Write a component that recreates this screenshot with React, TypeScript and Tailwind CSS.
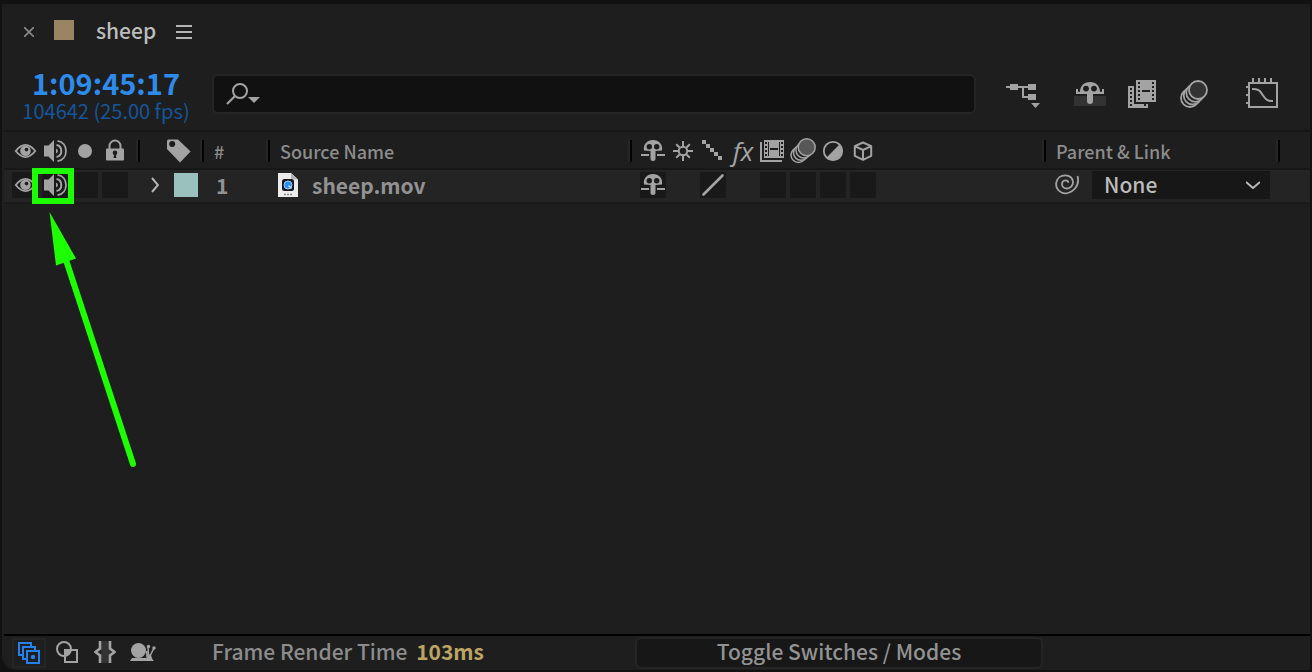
import type { ReactNode } from "react";

const INK = "#a3a3a3";

function Icon({ w = 26, h = 26, children }: { w?: number; h?: number; children: ReactNode }) {
  return (
    <svg width={w} height={h} viewBox={`0 0 ${w} ${h}`} fill="none" className="block shrink-0" aria-hidden="true">
      {children}
    </svg>
  );
}

const Eye = () => (
  <Icon>
    <path d="M3.8 13C8 7.6 11 6.9 13.5 6.9S19 7.6 23.2 13C19 18.4 16 19.1 13.5 19.1S8 18.4 3.8 13z" stroke={INK} strokeWidth="1.900" />
    <circle cx="13.5" cy="12.800" r="5.300" fill={INK} />
    <circle cx="14.500" cy="11.600" r="1.800" fill="#1c1c1c" />
  </Icon>
);

const Speaker = () => (
  <Icon>
    <path d="M2 7.5h4.5L12 2v22l-5.500-5.500H2z" fill={INK} />
    <path d="M14.500 7c3 .6 4.800 3 4.800 6s-1.800 5.400-4.800 6" stroke={INK} strokeWidth="2" />
    <path d="M15.500 2.800C21 3.600 24 8 24 13s-3 9.400-8.500 10.200" stroke={INK} strokeWidth="1.800" />
    <path d="M14 10.500a2.600 2.600 0 0 1 0 5z" fill={INK} />
  </Icon>
);

const Dot = () => (
  <Icon>
    <circle cx="13" cy="13" r="7" fill={INK} />
  </Icon>
);

const Lock = () => (
  <Icon>
    <path d="M7.500 12V8a5.500 5.500 0 0 1 11 0v4" stroke={INK} strokeWidth="2" />
    <rect x="4" y="10.500" width="18" height="12" rx="1" fill={INK} />
    <circle cx="13" cy="14.800" r="2.300" fill="#1c1c1c" />
    <path d="M12.200 15h1.600l.6 5h-2.800z" fill="#1c1c1c" />
  </Icon>
);

const Tag = () => (
  <Icon>
    <path d="M1 2.500L2 1.500H12L24.600 13.600 14 24.600 1 11z" fill={INK} />
    <circle cx="6.200" cy="6" r="3" fill="#1c1c1c" />
  </Icon>
);

const Shy = () => (
  <Icon>
    <path d="M4 12.500C3 6.500 7 2 13 2s10 4.500 9 10.500l-6.500.5v7.500a2.500 2.500 0 0 1-5 0V13z" fill={INK} />
    <circle cx="9.300" cy="8.800" r="2.700" fill="#1c1c1c" />
    <circle cx="16.700" cy="8.800" r="2.700" fill="#1c1c1c" />
    <path d="M1 17h8M17 17h8" stroke={INK} strokeWidth="2" />
  </Icon>
);

const Sun = () => (
  <Icon>
    <circle cx="13" cy="13" r="4.200" stroke={INK} strokeWidth="2" />
    <path d="M13 3v5M13 18v5M3 13h5M18 13h5M6.200 6.200l3.300 3.300M16.500 16.500l3.300 3.300M6.200 19.800l3.300-3.300M16.500 9.500l3.300-3.300" stroke={INK} strokeWidth="2" />
  </Icon>
);

const Stairs = () => (
  <Icon>
    <path d="M2 2h4v4H2zM6 6h4v4H6zM10 10h4v4h-4zM14 14h4v4h-4zM18 18h4v4h-4z" fill={INK} />
  </Icon>
);

const Film = () => (
  <Icon>
    <path d="M1 4v19h21" stroke={INK} strokeWidth="2" />
    <rect x="4" y="2" width="20" height="18" fill={INK} />
    <path d="M5 4h2v2H5zM5 8h2v2H5zM5 12h2v2H5zM5 16h2v2H5zM21 4h2v2h-2zM21 8h2v2h-2zM21 12h2v2h-2zM21 16h2v2h-2zM10 10h8v2h-8zM8 4h1v14H8zM19 4h1v14h-1z" fill="#1c1c1c" />
  </Icon>
);

const MotionBlur = () => (
  <Icon>
    <g stroke={INK} strokeWidth="1.500" fill="#1e1e1e">
      <circle cx="8.500" cy="17" r="7.500" />
      <circle cx="11" cy="14.800" r="7.500" />
      <circle cx="13.800" cy="12.200" r="7.800" />
      <circle cx="16.700" cy="9.300" r="8.500" fill="#575757" />
    </g>
  </Icon>
);

const Adjustment = () => (
  <Icon>
    <circle cx="13" cy="13" r="9.200" stroke={INK} strokeWidth="1.800" />
    <path d="M19.700 6.300A9.400 9.400 0 0 1 6.300 19.700z" fill={INK} />
  </Icon>
);

const Cube = () => (
  <Icon>
    <path d="M13 4.500l8.200 3.600v9.800L13 21.800l-8.200-3.900V8.100zM4.800 8.100L13 12l8.200-3.900M13 12v9.800" stroke={INK} strokeWidth="2" strokeLinejoin="round" />
  </Icon>
);

const Slash = () => (
  <Icon>
    <path d="M3.500 22.500l19-19" stroke={INK} strokeWidth="2.600" strokeLinecap="round" />
  </Icon>
);

const Flowchart = () => (
  <Icon w={36} h={28}>
    <path d="M2 7h24M19 7v10h6" stroke={INK} strokeWidth="2" />
    <path d="M6 4h8v6H6zM24 4h8v6h-8zM24 14h8v6h-8zM27 23h9l-4.500 5z" fill={INK} />
  </Icon>
);

const ShyLarge = () => (
  <Icon w={32} h={28}>
    <rect y="16" width="32" height="10" fill="#333" />
    <path d="M6 12C6 6 10 2 16 2s10 4 10 10l2-.5V9h2v5H19v7a3 3 0 0 1-6 0v-7H2V9h2v2.500z" fill={INK} />
    <circle cx="12" cy="8.600" r="2.900" fill="#1e1e1e" />
    <circle cx="20" cy="8.600" r="2.900" fill="#1e1e1e" />
  </Icon>
);

const FilmLarge = () => (
  <Icon w={28} h={28}>
    <path d="M0 6h6v18h14v4H0z" fill={INK} />
    <path d="M2 8h2v2H2zM2 12h2v2H2zM2 16h2v2H2zM2 20h2v2H2zM2 24h2v2H2zM16 24h2v2h-2z" fill="#1e1e1e" />
    <rect x="8" width="20" height="22" fill={INK} />
    <path d="M10 2h2v2h-2zM10 6h2v2h-2zM10 10h2v2h-2zM10 14h2v2h-2zM10 18h2v2h-2zM24 2h2v2h-2zM24 6h2v2h-2zM24 10h2v2h-2zM24 14h2v2h-2zM24 18h2v2h-2zM14 10h8v2h-8z" fill="#1e1e1e" />
  </Icon>
);

const MotionBlurLarge = () => (
  <Icon w={28} h={28}>
    <g stroke={INK} strokeWidth="1.800" fill="#1e1e1e">
      <circle cx="10" cy="18" r="9" />
      <circle cx="12.700" cy="15.500" r="9" />
      <circle cx="15.300" cy="12.800" r="9" />
      <circle cx="18" cy="10" r="9" fill="#333" />
    </g>
  </Icon>
);

const GraphEditor = () => (
  <Icon w={32} h={32}>
    <path d="M3 7h28v24H3zM7 2v4M13 2v4M19 2v4M25 2v4M0 11h3M0 19h3M0 27h3" stroke={INK} strokeWidth="2" />
    <path d="M6 13c8 0 8 2.500 11 6.500s4 5.500 10 5.500" stroke={INK} strokeWidth="2" />
  </Icon>
);

const PickWhip = () => (
  <Icon w={24} h={22}>
    <path d="M22.500 2c1.200 4.500.5 9-2.500 12.500-3.300 4-9 6-13.500 4C2.500 16.800.5 12.500 1.300 8.500 2.200 4 6 1.300 10.300 1.300c4.400 0 7.700 3 7.700 6.900 0 3.500-2.700 6.300-6 6.300-2.800 0-5-1.800-5-4.300 0-2.200 1.600-3.900 3.600-3.900 1.600 0 2.700 1 2.700 2.400" stroke={INK} strokeWidth="1.800" />
  </Icon>
);

const MovieFile = () => (
  <Icon w={20} h={24}>
    <path d="M0 0h13l7 6.500V24H0z" fill="#ececec" />
    <path d="M13 0l7 6.500h-7z" fill="#b4b4b4" />
    <rect x="4" y="6" width="12" height="12" rx="2.500" fill="#16181c" />
    <circle cx="10" cy="12" r="4" fill="#2a8cf0" stroke="#8fd0ff" strokeWidth="1" />
    <path d="M10.500 12.500l3 3" stroke="#cfe8ff" strokeWidth="1.200" />
    <path d="M6 21.500h8" stroke="#888" strokeWidth="1.500" strokeDasharray="2 1" />
  </Icon>
);

const LayerPanes = () => (
  <Icon w={22} h={22}>
    <g stroke="#2680eb" strokeWidth="2">
      <path d="M5 13H1V1h12v4" />
      <path d="M9 17H5V5h12v4" />
      <rect x="9" y="9" width="12" height="12" />
    </g>
    <circle cx="15" cy="15" r="2.200" fill="#2680eb" />
  </Icon>
);

const TransferPanes = () => (
  <Icon w={22} h={22}>
    <path d="M8 8h7.500A8 8 0 0 1 8 15.500z" fill={INK} />
    <circle cx="8" cy="8" r="7" stroke={INK} strokeWidth="2" />
    <rect x="9" y="9" width="12" height="12" stroke={INK} strokeWidth="2" />
  </Icon>
);

const Braces = () => (
  <Icon w={22} h={22}>
    <rect x="7" width="9" height="22" fill="#333" />
    <path d="M6 0v7.500L1.500 11 6 14.500V22M16 0v7.500l4.500 3.500-4.500 3.500V22" stroke={INK} strokeWidth="2.600" />
  </Icon>
);

const Snail = () => (
  <Icon w={26} h={18}>
    <circle cx="8.500" cy="7.500" r="7.500" fill={INK} />
    <path d="M0 18l2-3h13c2 0 2.500-1 3-4l3 1c1 3 1 4 3 6z" fill={INK} />
    <path d="M18.500 13l-.5-9M20 13l4-8M17 14l-.5-6" stroke={INK} strokeWidth="1.500" />
    <circle cx="18.500" cy="3.500" r="1.700" fill={INK} />
    <circle cx="24" cy="5" r="1.700" fill={INK} />
  </Icon>
);

function Slot({ boxed = false, label, children }: { boxed?: boolean; label?: string; children?: ReactNode }) {
  if (!boxed) return <span className="block size-[26px]">{children}</span>;
  return (
    <button type="button" aria-label={label} className="block size-[26px] bg-[#191919]">
      {children}
    </button>
  );
}

const Divider = () => <span className="h-[22px] w-1 shrink-0 border-r-2 border-l-2 border-r-black border-l-[#262626]" />;

const HEAD = "h-9 p-0 pt-0.5 text-left align-middle font-medium";
const CELL = "h-9 border-y-2 border-t-[#171717] border-b-[#1a1a1a] p-0 pb-0.5 align-middle";

export default function App() {
  return (
    <div className="flex min-h-screen flex-col bg-[#121212] pt-1 pr-0.5 pb-0.5 pl-0.5 font-['Noto_Sans_CJK_SC','Noto_Sans',sans-serif] text-[#a3a3a3]">
      <main className="flex grow flex-col rounded-bl-[14px] bg-[#1e1e1e] pl-0.5">
        <header className="flex h-14 items-center pl-[17px]">
          <button type="button" aria-label="Close" className="mr-[17px] flex size-4 items-center justify-center">
            <Icon w={10} h={10}>
              <path d="M0 0l10 10M10 0L0 10" stroke="#8a8a8a" strokeWidth="1.600" />
            </Icon>
          </button>
          <span className="mb-1 size-5 bg-[#998564]" />
          <h1 className="mb-1 ml-[22px] text-[21px] leading-7 font-medium text-[#bcbcbc]">sheep</h1>
          <button type="button" aria-label="Panel menu" className="ml-5">
            <Icon w={16} h={14}>
              <path d="M0 1h16M0 7h16M0 13h16" stroke="#b5b5b5" strokeWidth="2" />
            </Icon>
          </button>
        </header>

        <div className="flex h-[72px] items-start border-b-2 border-[#161616] pr-8">
          <div className="flex w-[208px] shrink-0 flex-col items-center pt-1.5 pr-1">
            <span className="text-[29px] leading-8 font-bold text-[#2d8ceb]">1:09:45:17</span>
            <span className="text-[20px] leading-[26px] text-[#17559a]">104642 (25.00 fps)</span>
          </div>
          <label className="mt-3.5 flex h-10 grow items-center rounded-md border-2 border-[#252525] bg-[#111] pl-3">
            <Icon w={36} h={24}>
              <circle cx="14" cy="9" r="7" stroke={INK} strokeWidth="2" />
              <path d="M9 14l-8 8" stroke={INK} strokeWidth="2.200" />
              <path d="M22 15h12l-6 6z" fill={INK} />
            </Icon>
            <input type="search" aria-label="Search layers" className="h-8 min-w-0 grow bg-transparent px-2 text-[20px] outline-none" />
          </label>
          <div className="flex h-[68px] shrink-0 items-center pl-7">
            <button type="button" aria-label="Mini-flowchart"><Flowchart /></button>
            <button type="button" aria-label="Hide shy layers" className="ml-[34px]"><ShyLarge /></button>
            <button type="button" aria-label="Frame blending" className="ml-[22px]"><FilmLarge /></button>
            <button type="button" aria-label="Motion blur" className="ml-6"><MotionBlurLarge /></button>
            <button type="button" aria-label="Graph editor" className="mb-1 ml-[38px]"><GraphEditor /></button>
          </div>
        </div>

        <div className="relative grow">
          <table className="w-full table-fixed border-separate border-spacing-0">
            <colgroup>
              <col className="w-[136px]" />
              <col className="w-16" />
              <col className="w-[66px]" />
              <col />
              <col className="w-[414px]" />
              <col className="w-[234px]" />
              <col className="w-[30px]" />
            </colgroup>
            <thead>
              <tr className="text-[18px] leading-[22px] text-[#8c8c8c]">
                <th className={HEAD}>
                  <div className="flex items-center justify-between pl-2">
                    <span className="flex gap-1"><Eye /><Speaker /><Dot /><Lock /></span>
                    <Divider />
                  </div>
                </th>
                <th className={HEAD}>
                  <div className="flex items-center justify-between pl-[26px]"><Tag /><Divider /></div>
                </th>
                <th className={HEAD}>
                  <div className="flex items-center justify-between pl-2.5"><span>#</span><Divider /></div>
                </th>
                <th className={HEAD}>
                  <div className="flex items-center justify-between pl-2.5"><span>Source Name</span><Divider /></div>
                </th>
                <th className={HEAD}>
                  <div className="flex items-center justify-between pl-2">
                    <span className="flex gap-1">
                      <Shy />
                      <Sun />
                      <Stairs />
                      <span className="flex size-[26px] items-center justify-center font-['Open_Sans',sans-serif] text-[26px] leading-6 font-normal text-[#a3a3a3] italic">fx</span>
                      <Film />
                      <MotionBlur />
                      <Adjustment />
                      <Cube />
                    </span>
                    <Divider />
                  </div>
                </th>
                <th className={HEAD}>
                  <div className="flex items-center justify-between pl-2.5"><span>Parent &amp; Link</span><Divider /></div>
                </th>
                <th className={HEAD} aria-label="Timeline" />
              </tr>
            </thead>
            <tbody>
              <tr className="bg-[#242424] text-[21px] leading-[26px] font-bold text-[#929292]">
                <td className={CELL}>
                  <div className="flex gap-1 pl-2">
                    <Slot boxed label="Video"><Eye /></Slot>
                    <Slot boxed label="Audio"><Speaker /></Slot>
                    <Slot boxed label="Solo" />
                    <Slot boxed label="Lock" />
                  </div>
                </td>
                <td className={CELL}>
                  <div className="flex items-center justify-between pr-1.5 pl-[11px]">
                    <button type="button" aria-label="Expand layer">
                      <Icon w={8} h={16}>
                        <path d="M1 1l6 7-6 7" stroke="#b5b5b5" strokeWidth="2" />
                      </Icon>
                    </button>
                    <span className="size-6 bg-[#9bc1be]" />
                  </div>
                </td>
                <td className={CELL}><span className="block pl-3">1</span></td>
                <td className={CELL}>
                  <div className="flex items-center gap-3.5 pl-2"><MovieFile /><span>sheep.mov</span></div>
                </td>
                <td className={CELL}>
                  <div className="flex gap-1 pl-2">
                    <Slot boxed label="Shy"><Shy /></Slot>
                    <Slot />
                    <Slot boxed label="Quality"><Slash /></Slot>
                    <Slot />
                    <Slot boxed label="Frame blend" />
                    <Slot boxed label="Motion blur" />
                    <Slot boxed label="Adjustment layer" />
                    <Slot boxed label="3D layer" />
                  </div>
                </td>
                <td className={CELL}>
                  <div className="flex items-center pr-2.5 pl-[9px]">
                    <PickWhip />
                    <div className="relative ml-[13px] grow">
                      <select aria-label="Parent" className="block h-7 w-full appearance-none bg-[#171717] pb-0.5 pl-3 text-[21px] leading-[26px] font-medium text-[#bcbcbc] outline-none">
                        <option>None</option>
                      </select>
                      <span className="pointer-events-none absolute top-2.5 right-2.5">
                        <Icon w={14} h={8}>
                          <path d="M0 1l7 6 7-6" stroke="#bcbcbc" strokeWidth="2" />
                        </Icon>
                      </span>
                    </div>
                  </div>
                </td>
                <td className={CELL} />
              </tr>
            </tbody>
          </table>

          <div className="pointer-events-none absolute top-9 left-7 h-9 w-[42px] border-6 border-[#1dff00]" />
          <svg className="pointer-events-none absolute top-20 left-11" width="90" height="260" viewBox="0 0 90 260" aria-hidden="true">
            <path d="M18 48L85 252" stroke="#1dff00" strokeWidth="6" strokeLinecap="round" />
            <path d="M1.500 0L28 46.500 8 53.500z" fill="#1dff00" />
          </svg>
        </div>

        <footer className="flex h-9 items-center border-t-2 border-black">
          <button type="button" aria-label="Layer switches pane" className="ml-2 flex h-[30px] w-[34px] items-center justify-center border-2 border-[#252525]">
            <LayerPanes />
          </button>
          <button type="button" aria-label="Transfer controls pane" className="mb-0.5 ml-2.5"><TransferPanes /></button>
          <button type="button" aria-label="In and out pane" className="mb-0.5 ml-4"><Braces /></button>
          <button type="button" aria-label="Render time pane" className="mb-0.5 ml-3.5"><Snail /></button>
          <p className="mb-1 ml-14 text-[21px] leading-7 font-medium text-[#8c8c8c]">
            Frame Render Time <b className="ml-1 text-[#bda462]">103ms</b>
          </p>
          <div className="flex grow justify-end pr-[267px]">
            <button type="button" className="h-8 w-[408px] rounded-md border-2 border-[#252525] bg-[#171717] pb-1 text-[21px] leading-6 font-medium text-[#929292]">
              Toggle Switches / Modes
            </button>
          </div>
        </footer>
      </main>
    </div>
  );
}
